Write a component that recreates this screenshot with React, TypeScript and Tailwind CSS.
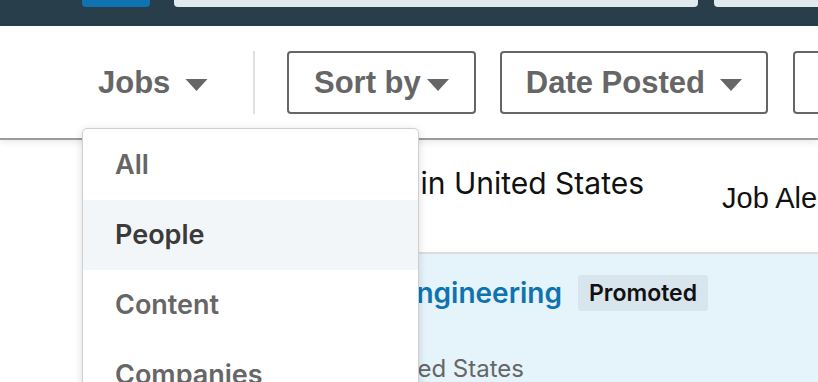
const Caret = ({ className }: { className: string }) => (
  <svg viewBox="0 0 22 12" className={className}>
    <path d="M0 0h22L11 12z" fill="currentColor" />
  </svg>
)

const menuItems = ["All", "People", "Content", "Companies"]

const App = () => {
  return (
    <div className="relative h-[382px] w-[818px] overflow-hidden bg-white" style={{ fontFamily: "Inter, 'Liberation Sans', sans-serif" }}>
      {/* top nav */}
      <div className="flex h-[26px] items-start bg-[#283e4b]">
        <div className="ml-[82px] h-[7px] w-[68px] shrink-0 rounded-b-[4px] bg-[#0f73b1]" />
        <div className="ml-[24px] h-[7px] w-[524px] shrink-0 rounded-b-[4px] bg-[#e1e9ee]" />
        <div className="ml-[16px] h-[7px] flex-1 rounded-bl-[4px] bg-[#e1e9ee]" />
      </div>

      {/* filter bar */}
      <div className="relative z-10 flex h-[114px] items-center border-b-2 border-[#9b9b9b] bg-white shadow-[0_3px_6px_rgba(0,0,0,0.08)]" style={{ fontFamily: "'Liberation Sans', Arial, sans-serif" }}>
        <div className="relative ml-[98px] flex shrink-0 items-center pt-[3px] text-[#666]">
          <span className="text-[31px] font-bold">Jobs</span>
          <Caret className="ml-[15px] mt-[2px] h-[12px] w-[23px]" />
        </div>
        <div className="ml-[45px] h-[63px] w-[2px] shrink-0 bg-[#e0e0e0]" />
        <div className="ml-[32px] flex h-[63px] w-[189px] shrink-0 items-center justify-center rounded-[4px] border-2 border-[#666] pt-[3px] text-[#666]">
          <span className="text-[31px] font-bold">Sort by</span>
          <Caret className="ml-[5px] mt-[2px] h-[12px] w-[24px]" />
        </div>
        <div className="ml-[24px] flex h-[63px] w-[268px] shrink-0 items-center justify-center rounded-[4px] border-2 border-[#666] pt-[3px] text-[#666]">
          <span className="text-[31px] font-bold">Date Posted</span>
          <Caret className="ml-[14px] mt-[2px] h-[12px] w-[24px]" />
        </div>
        <div className="ml-[25px] h-[63px] w-[60px] shrink-0 rounded-[4px] border-2 border-[#666]" />
      </div>

      {/* results */}
      <div className="flex flex-col">
        <div className="flex h-[112px] items-start">
          <div className="ml-[100px] mt-[21px] flex w-[544px] shrink-0 justify-end overflow-hidden whitespace-nowrap text-[30px] text-[#111]">
            <span>Software Engineering jobs in United States</span>
          </div>
          <div className="ml-[78px] mt-[37px] whitespace-nowrap text-[29px] text-[#111]" style={{ fontFamily: "'Liberation Sans', Arial, sans-serif" }}>
            Job Alerts
          </div>
        </div>
        <div className="ml-[300px] h-[2px] bg-[#dcdcdc]" />
        <div className="ml-[300px] flex h-[160px] flex-col bg-[#e5f3fb]">
          <div className="mt-[18px] flex items-center">
            <div className="flex w-[262px] shrink-0 justify-end overflow-hidden whitespace-nowrap text-[28px] font-semibold text-[#0e73b0]">
              <span>Software Engineering</span>
            </div>
            <div className="ml-[16px] shrink-0 rounded-[3px] bg-[#d8e5ec] px-[11px] py-[1px] text-[23px] font-semibold text-[#111]">
              Promoted
            </div>
          </div>
          <div className="mt-[37px] flex w-[224px] justify-end overflow-hidden whitespace-nowrap text-[24px] text-[#666]">
            <span>San Francisco, United States</span>
          </div>
        </div>
      </div>

      {/* jobs dropdown */}
      <div className="absolute left-[82px] top-[128px] z-20 w-[337px] rounded-[5px] border border-[#cfcfcf] bg-white pt-[1px] shadow-[0_2px_8px_rgba(0,0,0,0.15)]">
        {menuItems.map((item) => (
          <div
            key={item}
            className={
              item === "People"
                ? "flex h-[70px] items-center bg-[#f3f6f8] pl-[32px] pt-[1px] text-[27px] font-semibold text-[#3a3a3a]"
                : "flex h-[70px] items-center pl-[32px] pt-[1px] text-[27px] font-semibold text-[#666]"
            }
          >
            {item}
          </div>
        ))}
      </div>
    </div>
  )
}

export default App
